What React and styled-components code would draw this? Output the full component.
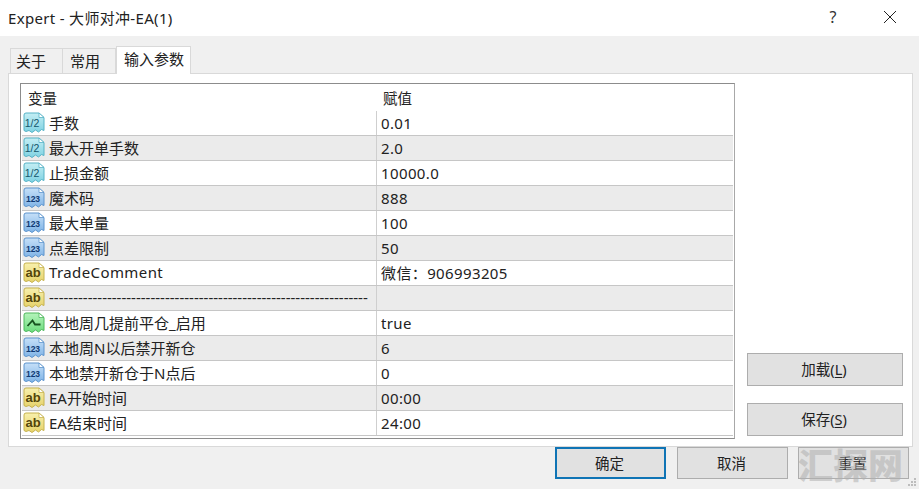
import React from "react";
import styled, { createGlobalStyle } from "styled-components";

const Global = createGlobalStyle`
  html, body { margin: 0; padding: 0; background: #f0f0f0; }
  body { font-family: "Noto Sans", "Noto Sans CJK SC", sans-serif; font-size: 15px; color: #1a1a1a; }
`;

const Dialog = styled.div`
  position: relative; width: 919px; height: 489px; overflow: hidden;
  display: flex; flex-direction: column; background: #f0f0f0;
`;
const TitleBar = styled.div`
  height: 36px; background: #fff; display: flex; align-items: center;
  padding: 0 0 2px 8px; box-sizing: border-box; font-size: 15px; color: #222;
`;
const TitleText = styled.div`flex: 1; letter-spacing: .32px;`;
const Help = styled.div`width: 20px; text-align: center; margin-right: 40px; font-size: 16px; color: #333;`;
const Close = styled.svg`width: 14px; height: 14px; margin-right: 22px; display: block;`;

const Tabs = styled.div`
  height: 37px; padding: 10px 0 0 10px; box-sizing: border-box;
  display: flex; align-items: flex-end;
`;
const Tab = styled.div`
  box-sizing: border-box; width: ${p => p.$w}px; height: ${p => p.$active ? 28 : 25}px;
  display: flex; align-items: center; padding: 0 0 ${p => p.$active ? 4 : 2}px ${p => p.$pad}px;
  font-size: 15px; color: #222;
  background: ${p => p.$active ? "#fff" : "#f0f0f0"};
  border: 1px solid #d9d9d9; border-bottom: 0;
  border-left-width: ${p => p.$first || p.$active ? 1 : 0}px;
  position: relative; ${p => p.$active ? "margin-bottom: -1px; z-index: 1;" : ""}
`;
const Panel = styled.div`
  box-sizing: border-box; width: 905px; height: 374px; margin-left: 8px;
  background: #fff; border: 1px solid #d9d9d9;
  padding: 9px 11px 7px 11px; display: flex; gap: 12px;
`;
const ListBox = styled.div`
  box-sizing: border-box; width: 715px; height: 356px; flex: none;
  border: 1px solid #8c8c8c; border-right-color: #a8a8a8; display: flex; flex-direction: column;
`;
const Head = styled.div`
  height: 27px; flex: none; display: grid; grid-template-columns: 355px 1fr; align-items: center;
  background: #fff;
`;
const HeadCell = styled.div`padding-left: ${p => p.$pad}px; font-size: 14.5px; color: #222;`;
const Row = styled.div`
  height: 25px; flex: none; box-sizing: border-box; display: grid; grid-template-columns: 355px 1fr;
  margin-left: 1px; margin-right: 1px;
  background: ${p => p.$alt ? "#ebebeb" : "#fff"};
  border-bottom: 1px solid #c6c6c6;
`;
const NameCell = styled.div`
  display: flex; align-items: center; gap: 4px; padding-left: 1px;
  border-right: 1px solid #cfcfcf; white-space: nowrap; overflow: hidden; color: #222;
`;
const NameText = styled.span`
  position: relative; top: -1px;
  letter-spacing: ${p => p.$wide ? ".4px" : "0"};
`;
const ValueCell = styled.div`
  display: flex; align-items: center; padding: 0 0 1px 4px; color: #222; letter-spacing: .38px;
`;
const IconSvg = styled.svg`width: 22px; height: 22px; flex: none; display: block;`;
const Side = styled.div`
  flex: none; display: flex; flex-direction: column; justify-content: flex-end;
  gap: 17px; padding-bottom: 3px;
`;
const Btn = styled.div`
  box-sizing: border-box; width: ${p => p.$w}px; height: ${p => p.$h}px;
  display: flex; align-items: center; justify-content: center; padding: 0 2px 2px 0;
  background: #e1e1e1; color: #222; font-size: 14.5px;
  border: ${p => p.$primary ? "2px solid #0f74b5" : "1px solid #adadad"};
`;
const Under = styled.span`text-decoration: underline; text-underline-offset: 2px;`;
const Footer = styled.div`
  display: flex; justify-content: flex-end; gap: 10px; padding: 0 10px 0 0; height: 32px;
  > :first-child { margin-right: 1px; }
`;
const Watermark = styled.div`
  position: absolute; left: 798px; top: 444px; font-size: 35px; font-weight: 900; line-height: 40px;
  color: rgba(175,175,175,.55); pointer-events: none; white-space: nowrap;
  font-family: "Noto Sans CJK SC", sans-serif;
`;
const Grip = styled.svg`position: absolute; right: 1px; bottom: 1px; width: 12px; height: 12px;`;

const palettes = {
  half: { top: "#c4eef4", bottom: "#7fd2e2", edge: "#57b3c6", text: "#14566a" },
  num: { top: "#c6e0f8", bottom: "#7fb3e6", edge: "#5c94cd", text: "#0f3a74" },
  text: { top: "#f8f0ad", bottom: "#e6d26a", edge: "#c6b24f", text: "#54450a" },
  bool: { top: "#b5f3bb", bottom: "#6bdc7c", edge: "#4eb75d", text: "#17521f" },
};

function ParamIcon({ kind }) {
  const c = palettes[kind];
  const gid = `grad-${kind}`;
  return (
    <IconSvg viewBox="0 0 22 22">
      <defs>
        <linearGradient id={gid} x1="0" y1="0" x2="0" y2="1">
          <stop offset="0" stopColor={c.top} />
          <stop offset="1" stopColor={c.bottom} />
        </linearGradient>
      </defs>
      <path
        d="M1 3 Q1 1 3 1 H16 L21 5.5 V18.5 L18.5 17.5 L15.5 20 L12.5 18 L9 20.5 L6 18.5 L3 19.5 L1 18.5 Z"
        fill={`url(#${gid})`} stroke={c.edge} strokeWidth="1"
      />
      <path d="M16 1 V5.5 H21 Z" fill="#fff" stroke={c.edge} strokeWidth=".8" />
      {kind === "bool" ? (
        <path d="M4.5 14 L9.5 8.5 L12 12.5 H17.5" fill="none" stroke={c.text} strokeWidth="1.8" />
      ) : (
        <text
          x={kind === "half" ? 9 : 10} y={kind === "text" ? 15 : 14.5} textAnchor="middle" fill={c.text}
          fontFamily="Liberation Sans, sans-serif" fontWeight={kind === "half" ? 400 : 700}
          fontSize={kind === "text" ? 13 : kind === "num" ? 8.5 : 10.5}
        >
          {kind === "half" ? "1/2" : kind === "num" ? "123" : "ab"}
        </text>
      )}
    </IconSvg>
  );
}

const rows = [
  ["half", "手数", "0.01"],
  ["half", "最大开单手数", "2.0"],
  ["half", "止损金额", "10000.0"],
  ["num", "魔术码", "888"],
  ["num", "最大单量", "100"],
  ["num", "点差限制", "50"],
  ["text", "TradeComment", "微信：906993205"],
  ["text", "-".repeat(66), ""],
  ["bool", "本地周几提前平仓_启用", "true"],
  ["num", "本地周N以后禁开新仓", "6"],
  ["num", "本地禁开新仓于N点后", "0"],
  ["text", "EA开始时间", "00:00"],
  ["text", "EA结束时间", "24:00"],
];

export default function App() {
  return (
    <Dialog>
      <Global />
      <TitleBar>
        <TitleText>Expert - 大师对冲-EA(1)</TitleText>
        <Help>?</Help>
        <Close viewBox="0 0 14 14">
          <path d="M1 1 L13 13 M13 1 L1 13" stroke="#222" strokeWidth="1" fill="none" />
        </Close>
      </TitleBar>
      <Tabs>
        <Tab $w={53} $pad={5} $first>关于</Tab>
        <Tab $w={53} $pad={7}>常用</Tab>
        <Tab $w={75} $pad={7} $active>输入参数</Tab>
      </Tabs>
      <Panel>
        <ListBox>
          <Head>
            <HeadCell $pad={7}>变量</HeadCell>
            <HeadCell $pad={7}>赋值</HeadCell>
          </Head>
          {rows.map(([kind, name, value], i) => (
            <Row key={i} $alt={i % 2 === 1}>
              <NameCell>
                <ParamIcon kind={kind} />
                <NameText $wide={name === "TradeComment"}>{name}</NameText>
              </NameCell>
              <ValueCell>{value}</ValueCell>
            </Row>
          ))}
        </ListBox>
        <Side>
          <Btn $w={156} $h={33}>加载(<Under>L</Under>)</Btn>
          <Btn $w={156} $h={33}>保存(<Under>S</Under>)</Btn>
        </Side>
      </Panel>
      <Footer>
        <Btn $w={111} $h={32} $primary>确定</Btn>
        <Btn $w={111} $h={32}>取消</Btn>
        <Btn $w={111} $h={32}>重置</Btn>
      </Footer>
      <Watermark>汇探网</Watermark>
      <Grip viewBox="0 0 12 12">
        <g fill="#bdbdbd">
          <rect x="8" y="2" width="2" height="2" />
          <rect x="5" y="5" width="2" height="2" />
          <rect x="8" y="5" width="2" height="2" />
          <rect x="2" y="8" width="2" height="2" />
          <rect x="5" y="8" width="2" height="2" />
          <rect x="8" y="8" width="2" height="2" />
        </g>
      </Grip>
    </Dialog>
  );
}
